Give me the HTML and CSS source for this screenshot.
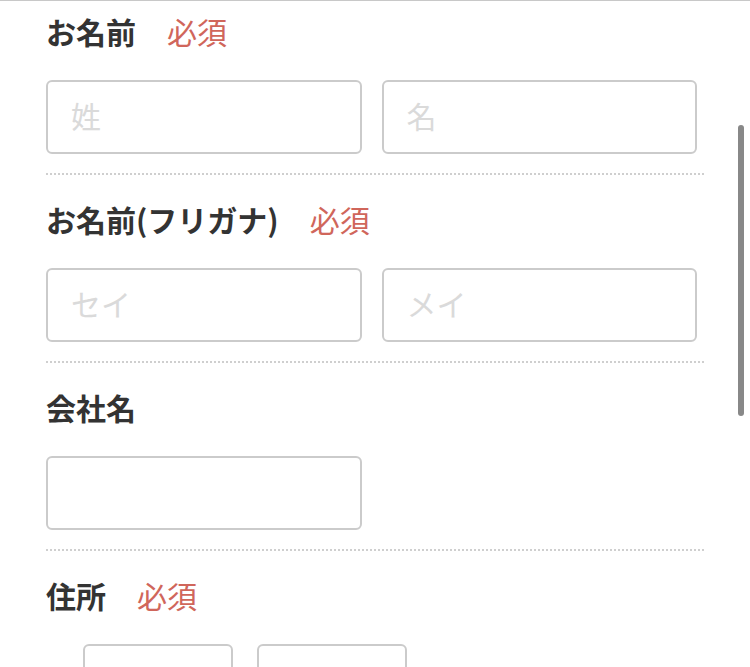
FILE: index.html
```html
<!DOCTYPE html>
<html lang="ja">
<head>
    <meta charset="UTF-8">
    <meta name="viewport" content="width=device-width, initial-scale=1.0">
    <title>お問い合わせ</title>
    <link rel="stylesheet" href="styles.css">
</head>
<body>
    <div class="page">
        <form class="form">
            <div class="field">
                <div class="field-head">
                    <label>お名前</label>
                    <span class="required">必須</span>
                </div>
                <div class="field-body">
                    <input type="text" class="input" placeholder="姓">
                    <input type="text" class="input" placeholder="名">
                </div>
            </div>
            <div class="field">
                <div class="field-head">
                    <label>お名前(フリガナ)</label>
                    <span class="required">必須</span>
                </div>
                <div class="field-body">
                    <input type="text" class="input" placeholder="セイ">
                    <input type="text" class="input" placeholder="メイ">
                </div>
            </div>
            <div class="field">
                <div class="field-head">
                    <label>会社名</label>
                </div>
                <div class="field-body">
                    <input type="text" class="input">
                </div>
            </div>
            <div class="field">
                <div class="field-head">
                    <label>住所</label>
                    <span class="required">必須</span>
                </div>
                <div class="field-body zip">
                    <input type="text" class="input short">
                    <input type="text" class="input short">
                </div>
            </div>
        </form>
        <!-- overlay scroll indicator -->
        <div class="scroll-thumb"></div>
    </div>
</body>
</html>
```

FILE: styles.css
```css
* {
    box-sizing: border-box;
    margin: 0;
    padding: 0;
}

body {
    background: #fff;
    font-family: "Noto Sans CJK JP", "Noto Sans", sans-serif;
    color: #333;
    overflow: hidden;
}

.page {
    position: relative;
    border-top: 1px solid #c8c8c8;
    min-height: 100vh;
}

.form {
    padding: 0 46px;
}

.field {
    padding: 24px 0 19px;
    border-bottom: 2px dotted #cfcfcf;
}

.field:first-child {
    padding-top: 10px;
}

.field-head {
    display: flex;
    align-items: center;
    gap: 31px;
    height: 40px;
    font-size: 30px;
    line-height: 40px;
}

.field-head label {
    font-weight: 700;
    color: #333;
}

.required {
    color: #d0665b;
}

.field-body {
    display: flex;
    gap: 3%;
    margin-top: 29px;
}

.input {
    width: 48%;
    height: 74px;
    border: 2px solid #cbcbcb;
    border-radius: 6px;
    padding: 0 23px 4px;
    font-family: inherit;
    font-size: 30px;
    color: #333;
    outline: none;
    background: #fff;
}

.input::placeholder {
    color: #dadada;
}

.zip {
    padding-left: 37px;
    gap: 24px;
}

.input.short {
    width: 150px;
}

.scroll-thumb {
    position: absolute;
    top: 124px;
    right: 6px;
    width: 6px;
    height: 291px;
    border-radius: 3px;
    background: #888;
}
```
